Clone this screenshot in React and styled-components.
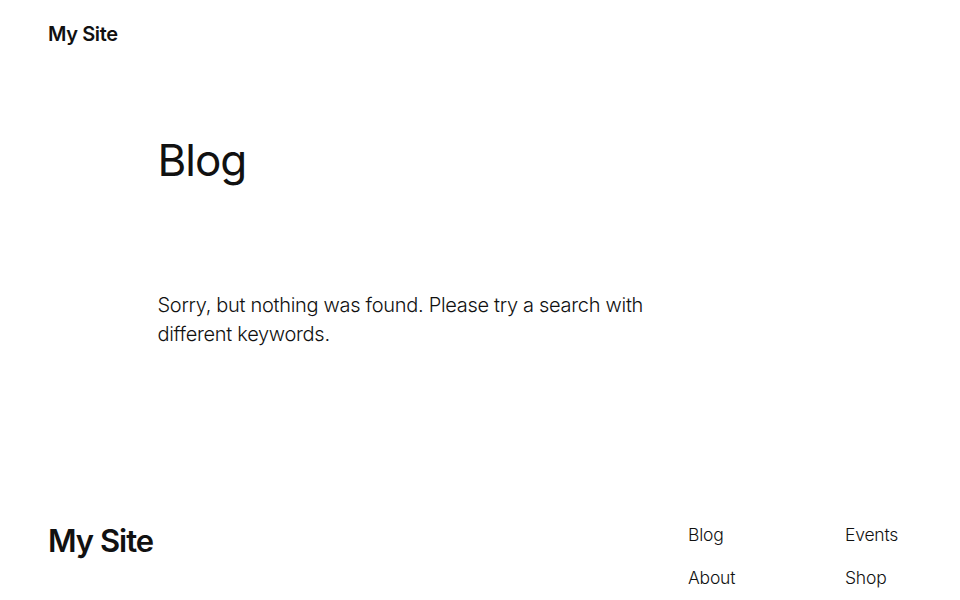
import styled, { createGlobalStyle } from "styled-components";

const GlobalStyle = createGlobalStyle`
    body {
        margin: 0;
        background: #ffffff;
        color: #111111;
        font-family: Inter, "Noto Sans", sans-serif;
        font-weight: 300;
    }
`;

const App = () => {
    return (<Page>
        <GlobalStyle />
        <Header>
            <SiteTitle>My Site</SiteTitle>
        </Header>
        <Main>
            <Content>
                <Heading>Blog</Heading>
                <Notice>Sorry, but nothing was found. Please try a search with different keywords.</Notice>
            </Content>
        </Main>
        <Footer>
            <FooterTitle>My Site</FooterTitle>
            <FooterNav>
                <NavColumn>
                    <NavLink href="#">Blog</NavLink>
                    <NavLink href="#">About</NavLink>
                </NavColumn>
                <NavColumn>
                    <NavLink href="#">Events</NavLink>
                    <NavLink href="#">Shop</NavLink>
                </NavColumn>
            </FooterNav>
        </Footer>
    </Page>);
}

export default App;

const Page = styled.div`
    width: 100%;
    min-height: 600px;
    display: flex;
    flex-direction: column;
`

const Header = styled.header`
    display: flex;
    align-items: center;
    padding: 20px 48px;
`

const SiteTitle = styled.a`
    font-size: 20px;
    line-height: 28px;
    font-weight: 600;
    letter-spacing: -0.4px;
    color: #111111;
    text-decoration: none;
`

const Main = styled.main`
    display: flex;
    justify-content: center;
    padding: 0 48px;
`

const Content = styled.div`
    width: 645px;
    display: flex;
    flex-direction: column;
`

const Heading = styled.h1`
    margin: 64px 0 0;
    font-size: 44px;
    line-height: 56px;
    font-weight: 400;
    letter-spacing: -1px;
`

const Notice = styled.p`
    margin: 103px 0 0;
    width: 500px;
    font-size: 20px;
    line-height: 29px;
    font-weight: 300;
    letter-spacing: -0.3px;
`

const Footer = styled.footer`
    display: flex;
    justify-content: space-between;
    align-items: flex-start;
    padding: 172px 55px 0 48px;
`

const FooterTitle = styled.a`
    font-size: 31px;
    line-height: 40px;
    font-weight: 600;
    letter-spacing: -1px;
    color: #111111;
    text-decoration: none;
`

const FooterNav = styled.nav`
    display: flex;
    gap: 97px;
    margin-top: 1px;
`

const NavColumn = styled.div`
    display: flex;
    flex-direction: column;
    gap: 17px;
    width: 60px;
`

const NavLink = styled.a`
    font-size: 17.5px;
    line-height: 26px;
    font-weight: 300;
    letter-spacing: -0.2px;
    color: #111111;
    text-decoration: none;
`
